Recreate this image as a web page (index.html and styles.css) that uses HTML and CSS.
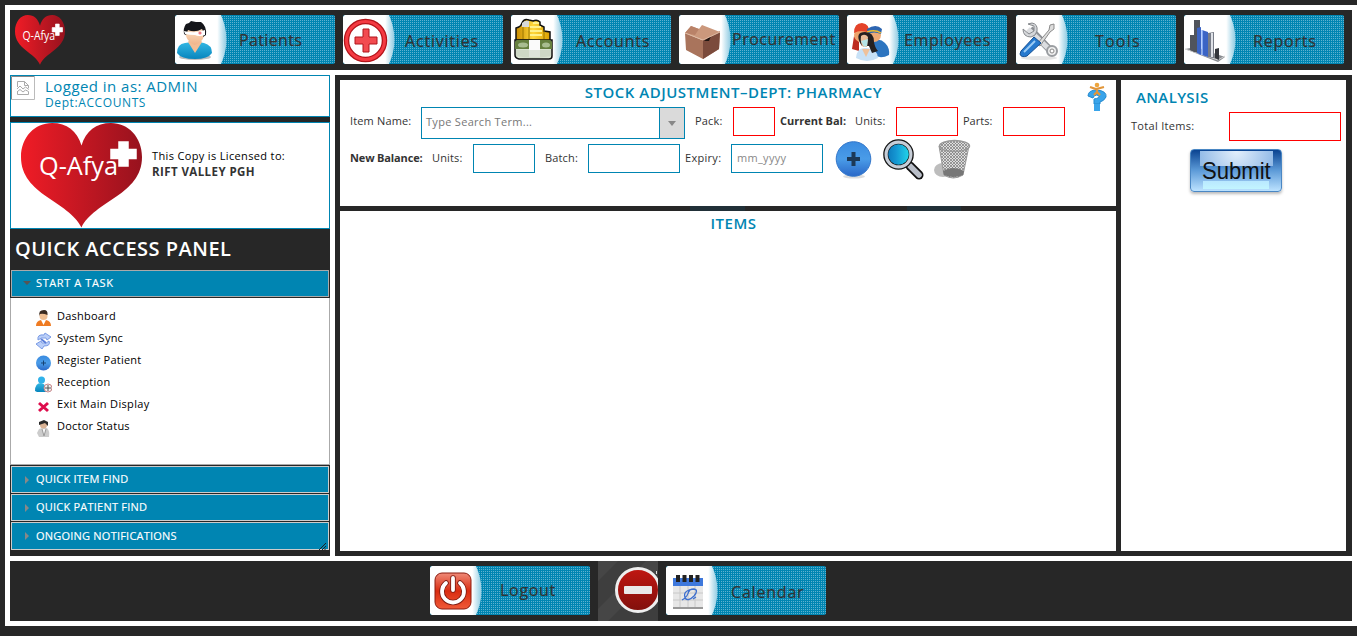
FILE: index.html
```html
<!DOCTYPE html>
<html lang="en"><head><meta charset="utf-8"><title>Q-Afya</title>
<link rel="stylesheet" href="styles.css"></head>
<body>
<svg class="defs" width="0" height="0" aria-hidden="true">
<defs>
<linearGradient id="red"><stop offset="0" stop-color="#f01c26"/><stop offset="1" stop-color="#97121e"/></linearGradient>
<linearGradient id="fade"><stop offset=".82" stop-color="#fff"/><stop offset="1" stop-color="#8fcbe2"/></linearGradient>
<linearGradient id="blue" x2="0" y2="1"><stop offset="0" stop-color="#3a8be0"/><stop offset=".5" stop-color="#4a9ce8"/><stop offset="1" stop-color="#2a68c8"/></linearGradient>
<linearGradient id="cyan" x2="0" y2="1"><stop offset="0" stop-color="#35b8e4"/><stop offset="1" stop-color="#0785bd"/></linearGradient>
<linearGradient id="gold"><stop offset="0" stop-color="#c88a00"/><stop offset=".5" stop-color="#ffd83b"/><stop offset="1" stop-color="#dba000"/></linearGradient>
<linearGradient id="lens"><stop offset="0" stop-color="#0a74b8"/><stop offset=".4" stop-color="#1596d2"/><stop offset="1" stop-color="#23e0ee"/></linearGradient>
<linearGradient id="power" x2="0" y2="1"><stop offset="0" stop-color="#ef8a78"/><stop offset=".5" stop-color="#d92c10"/><stop offset="1" stop-color="#f05a38"/></linearGradient>
<linearGradient id="stop" x2="0" y2="1"><stop offset="0" stop-color="#c01712"/><stop offset="1" stop-color="#80100c"/></linearGradient>
<linearGradient id="skin" x2="0" y2="1"><stop offset="0" stop-color="#ffe3c6"/><stop offset="1" stop-color="#eeb48a"/></linearGradient>
<pattern id="mesh" width="3" height="3" patternUnits="userSpaceOnUse"><rect width="3" height="3" fill="#ddd"/><path d="M0 0l3 3M3 0L0 3" stroke="#777" stroke-width=".7"/></pattern>
<symbol id="heart" viewBox="0 0 121 105"><path d="M60.500 104.500C48 78 0 72 0 34C0 14 14 0 31 0C46 0 56 8 60.500 22.500C65 8 75 0 90 0C107 0 121 14 121 34C121 72 73 78 60.500 104.500Z" fill="url(#red)"/><path d="M98 19h9v7.500h8v9h-8v7.500h-9v-7.500h-8v-9h8z" fill="#fff" stroke="#fff" stroke-width="1.500"/><text x="18" y="52" font-size="26" textLength="79" lengthAdjust="spacingAndGlyphs" fill="#fff" font-family="Open Sans,sans-serif">Q-Afya</text></symbol>
<symbol id="cap" viewBox="0 0 54 49"><path d="M2 0H46Q57 24.500 46 49H2Q0 49 0 47V2Q0 0 2 0Z" fill="url(#fade)"/></symbol>
</defs></svg>
<div class="frame">
<header class="bar top">
<svg class="logo" width="50" height="50" viewBox="0 0 121 105" preserveAspectRatio="none"><use href="#heart" width="121" height="105"/></svg>
<nav class="nav">
<a class="btn"><svg width="54" height="49"><use href="#cap"/><ellipse cx="20" cy="42" rx="16" ry="3" fill="#bbb"/><path d="M2 38Q2 29 10 28Q20 26 29 28Q37 30 37 38Q33 44 20 44Q6 44 2 38Z" fill="url(#cyan)"/><path d="M13 27L20 38L27 27L24 23H16Z" fill="#f2bd94"/><path d="M10 15Q10 26 19.500 30Q31 26 29 15Q20 10 10 15Z" fill="url(#skin)"/><path d="M9 19Q8 13 11 9L14 8L16 6L21 7L26 7Q32 11 31 20L28 22Q29 17 27 14Q20 18 13 15L11 20Z" fill="#15161a"/><path d="M9 16Q20 19 30 15V20Q24 22 20 20Q14 20 10 19Z" fill="#fff"/><circle cx="25" cy="18" r="1.600" fill="#ef7b86"/></svg><span class="t t1">Patients</span></a>
<a class="btn"><svg width="54" height="49"><use href="#cap"/><circle cx="22.500" cy="25.500" r="19" fill="#fff" stroke="#b3141a" stroke-width="5.500"/><circle cx="22.500" cy="25.500" r="19" fill="none" stroke="#f43a42" stroke-width="3"/><path d="M20 14h6v8h8v7h-8v8h-6v-8h-8v-7h8z" fill="#f24b50" stroke="#b0141a"/></svg><span class="t t2">Activities</span></a>
<a class="btn"><svg width="54" height="49"><use href="#cap"/><g stroke="#111" stroke-width="1.500"><path d="M5 25V13Q10 12 11 8Q13 3 18 5L22 6Q26 4 29 7V10L33 12V16L39 17V26Z" fill="url(#gold)"/><path d="M4 25H41V41Q41 44 38 44H8Q4 43 4 40Z" fill="#dbe4d2"/></g><path d="M11 12V8Q14 5 18 6V12Z" fill="#d9d9d9"/><path d="M12 12V24M18 12V24M33 15V24" stroke="#9c7600"/><path d="M22 8H28M19 12H30M19 16H31M19 20H31" stroke="#fff18b" stroke-width="2"/><path d="M4 27L6 25H39L41 27V34H4Z" fill="#66803f"/><ellipse cx="12" cy="30" rx="5" ry="2.500" fill="#a9bd90"/><ellipse cx="35" cy="30" rx="4" ry="2.500" fill="#a9bd90"/><path d="M18 25H29V42H18Z" fill="#fafafa"/><path d="M5 35H40V41Q22 44 5 41Z" fill="#c1cbb8" opacity=".5"/></svg><span class="t t3">Accounts</span></a>
<a class="btn"><svg width="54" height="49"><use href="#cap"/><path d="M6 18L23 25L41 16L40 34L24 44L7 35Z" fill="#a9745c"/><path d="M24 25L41 17L40 34L24 44Z" fill="#7b4b3c"/><path d="M6 18L12 11L20 14L23 10L41 17L24 25Z" fill="#cb987c"/><path d="M12 11L20 14L16 20L6 18Z" fill="#b98268"/><path d="M25 26L32 21L30 26Z" fill="#211511"/><path d="M6 18L24 25L41 17" fill="none" stroke="#debaa2"/></svg><span class="t t4">Procurement</span></a>
<a class="btn"><svg width="54" height="49"><use href="#cap"/><path d="M24 29Q31 21 38 28Q43 33 42 40Q33 45 25 39Z" fill="#2d75c0"/><path d="M5 34L7 21L12 27V36Z" fill="#bd2c20"/><circle cx="14" cy="20" r="7" fill="#eda36c"/><circle cx="27" cy="20" r="7" fill="#efaa75"/><path d="M7 18Q7 8 15 8Q23 9 22 18Q14 14 7 18Z" fill="#e44329"/><path d="M20 14Q29 8 35 14L34 19Q27 16 21 19Z" fill="#2d66b2"/><path d="M20 17Q28 14 34 18" stroke="#f4bd2b" stroke-width="1.500" fill="none"/><path d="M9 43Q10 33 17 33Q30 32 31 43Q20 49 9 43Z" fill="#c8e1f6"/><path d="M13 28Q8 17 18 17Q27 17 27 27Q28 33 31 36L25 38L22 31L15 31Z" fill="#252020"/><path d="M14 21Q18 18 21 22L20 32H16Q13 28 14 21Z" fill="#e9bd98"/><path d="M14 26L21 24L20 31L17 32Z" fill="#b4e4e6"/><path d="M15 34L19 42L23 34" fill="#efc19a"/></svg><span class="t t5">Employees</span></a>
<a class="btn"><svg width="54" height="49"><use href="#cap"/><ellipse cx="23" cy="43" rx="18" ry="2" fill="#e4e4e4"/><path d="M14 14L35 36" stroke="#8d9095" stroke-width="7"/><path d="M12 14L35 36" stroke="#dcdee1" stroke-width="5"/><path d="M12 9L18 11L18 16L13 19L7 14Q7 22 15 22L19 20L21 16Q22 9 16 8Z" fill="#d5d7da" stroke="#86898d"/><circle cx="36" cy="36" r="5" fill="#eee" stroke="#9a9da1" stroke-width="2"/><circle cx="36" cy="36" r="2" fill="#fff" stroke="#888"/><path d="M21 29L33 15L34 10L38 9L38 14L34 17L24 31Z" fill="#ddd" stroke="#8b8b8b"/><path d="M5 36L18 22L25 28L11 41Q5 43 4 39Z" fill="#2679ce" stroke="#164f92"/><path d="M8 37L19 26" stroke="#9bccf5" stroke-width="2"/></svg><span class="t t6">Tools</span></a>
<a class="btn"><svg width="54" height="49"><use href="#cap"/><path d="M1 34L12 32L41 42L34 47Z" fill="#888b90"/><path d="M1 34L34 45L41 41" stroke="#d0d0d0" fill="none"/><path d="M6 20H10V37L6 35ZM10 5H16V38L10 37Z" fill="#50545c"/><path d="M13 13L17 12V40L13 38ZM18 15L24 17V42L18 40Z" fill="#3b64c5"/><path d="M18 15V40" stroke="#9dbcff" stroke-width="1.500"/><path d="M24 18L30 17V43L24 42Z" fill="#777c87"/><path d="M28 18V42" stroke="#dfe2e8" stroke-width="2"/><path d="M31 34L35 33V45L31 43Z" fill="#33363b"/></svg><span class="t t7">Reports</span></a>
</nav></header>
<div class="main">
<aside class="side">
<section class="user"><svg class="broken" width="24" height="24"><path d="M0 0H24V24H0Z" fill="#fff"/><path d="M.5 24V.5H24" fill="none" stroke="#888"/><path d="M23.500 0V23.500H0" fill="none" stroke="#bbb"/><g fill="none" stroke="#aaa"><path d="M6.500 11V5.500H13.500L17.500 9.500V12M13.500 5.500V9.500H17.500M6 13L9 10L12 13L14.500 11L18 13.500M6.500 15V18.500H17.500V15.500L14.500 14L12 16L9 13.500L6.500 15.500"/></g></svg><div><p class="who"><span class="t">Logged in as: ADMIN</span></p><p class="dept"><span class="t">Dept:ACCOUNTS</span></p></div></section>
<section class="license"><svg width="121" height="105"><use href="#heart"/></svg><div><p><span class="t l1">This Copy is Licensed to:</span></p><p class="org"><span class="t">RIFT VALLEY PGH</span></p></div></section>
<h1><span class="t">QUICK ACCESS PANEL</span></h1>
<div class="acc">
<h3 class="open"><svg width="8" height="5"><path d="M0 0H8L4 4Z" fill="#555"/></svg><span class="t a1">START A TASK</span></h3>
<ul class="tasks">
<li><svg width="17" height="17"><path d="M1 16Q1 11 6 10L11 10Q16 11 16 16Z" fill="#ef7b22"/><path d="M6 10L8.500 15L11 10Z" fill="#fff"/><circle cx="8.500" cy="6" r="4" fill="#f0bf92"/><path d="M4.500 6Q3 0 9 0Q13 0 12.500 5Q8 3 5 4Z" fill="#3b2b21"/></svg><span class="t k1">Dashboard</span></li>
<li><svg width="17" height="17"><path d="M3 8Q2 2 9 3L10 1L16 5L12 8L11 6Q6 5 3 8ZM14 9Q16 14 9 14L7 17L1 12L6 9L7 11Q12 12 14 9Z" fill="#b9cef8" stroke="#7a9be5"/><path d="M6 7L11 11" stroke="#5c7fd9" stroke-width="2"/></svg><span class="t k2">System Sync</span></li>
<li><svg width="17" height="17"><circle cx="8.500" cy="9" r="7.500" fill="url(#blue)"/><path d="M8.500 6.500V11.500M6 9H11" stroke="#174275"/></svg><span class="t k3">Register Patient</span></li>
<li><svg width="17" height="17"><circle cx="6.500" cy="4" r="3.500" fill="#30b2ea"/><path d="M0 15Q0 7 6 7Q12 8 12 16H2Z" fill="url(#cyan)"/><circle cx="13" cy="12" r="4" fill="#eee" stroke="#c9898c"/><path d="M13 9V15M10 12H16" stroke="#555"/></svg><span class="t k4">Reception</span></li>
<li><svg width="17" height="17"><path d="M4 5L13 13M13 5L4 13" stroke="#de0c4c" stroke-width="3"/></svg><span class="t k5">Exit Main Display</span></li>
<li><svg width="17" height="17"><path d="M4 9L7 8L12 8Q15 11 14 17H4L2 13Z" fill="#ccc"/><path d="M7 9L9 16L11 9" fill="#f5f5f5" stroke="#999"/><circle cx="8.500" cy="5" r="3.500" fill="#d9b294"/><path d="M4 5V2L9 0L13 2V6L10 3Z" fill="#292929"/></svg><span class="t k6">Doctor Status</span></li>
</ul>
<h3><svg width="5" height="8"><path d="M0 0V8L4 4Z" fill="#888"/></svg><span class="t a2">QUICK ITEM FIND</span></h3>
<h3><svg width="5" height="8"><path d="M0 0V8L4 4Z" fill="#888"/></svg><span class="t a2">QUICK PATIENT FIND</span></h3>
<h3 class="last"><svg width="5" height="8"><path d="M0 0V8L4 4Z" fill="#888"/></svg><span class="t a2">ONGOING NOTIFICATIONS</span><svg class="grip" width="7" height="7"><path d="M0 7L7 0M3 7L7 3M5.500 7L7 5.500" stroke="#222"/></svg></h3>
</div></aside>
<div class="work">
<div class="center">
<section class="adjust">
<h2><span class="t">STOCK ADJUSTMENT–DEPT: PHARMACY</span></h2>
<svg class="help" width="22" height="30"><path d="M1 14Q1 8 10 8Q20 9 19 15Q17 19 13 20V22H7V17Q13 16 12 14Q10 12 7 14L6 16Z" fill="#39a4ea" stroke="#2389ce"/><path d="M7 22H13V29H7Z" fill="#39a4ea"/><circle cx="10" cy="3" r="2.300" fill="#eda53e"/><path d="M3 5L9 7L17 5M10 6V10L7 13M10 10L13 13" stroke="#e2963a" stroke-width="2.200" fill="none"/></svg>
<div class="row r1">
<label class="w71"><span class="t f1">Item Name:</span></label><div class="combo"><span class="t f2">Type Search Term...</span><i><svg width="8" height="5"><path d="M0 0H8L4 5Z" fill="#888"/></svg></i></div>
<label class="w38 in"><span class="t f1">Pack:</span></label><div class="field red s42"></div>
<label class="w75 b"><span class="t">Current Bal:</span></label><label class="w41"><span class="t f1">Units:</span></label><div class="field red s62"></div>
<label class="w40"><span class="t">Parts:</span></label><div class="field red s62"></div></div>
<div class="row r2">
<label class="w82 b"><span class="t f7">New Balance:</span></label><label class="w41"><span class="t f1">Units:</span></label><div class="field s62"></div>
<label class="w43 in"><span class="t f1">Batch:</span></label><div class="field s92"></div>
<label class="w46"><span class="t f2">Expiry:</span></label><div class="field s92 ph"><span class="t f2">mm_yyyy</span></div>
<div class="icons"><svg width="38" height="42"><ellipse cx="19" cy="37.500" rx="11" ry="2" fill="#ddd"/><circle cx="18.500" cy="20" r="17.300" fill="url(#blue)" stroke="#3477ca"/><path d="M18.500 13V27M12 20H25" stroke="#1c3957" stroke-width="4"/></svg><svg class="mag" width="42" height="42"><path d="M27 27L36 36" stroke="#111" stroke-width="9" stroke-linecap="round"/><path d="M27 27L36 36" stroke="#b9bec8" stroke-width="5.500" stroke-linecap="round"/><circle cx="15.500" cy="15.500" r="12.800" fill="url(#lens)" stroke="#141414" stroke-width="5"/><circle cx="15.500" cy="15.500" r="12.400" fill="none" stroke="#c7ced8" stroke-width="3.200"/></svg><svg class="bin" width="42" height="42"><ellipse cx="10" cy="31" rx="9" ry="7" fill="#bdbdbd"/><path d="M6 7L11 36Q20 42 30 36L36 7Z" fill="url(#mesh)" stroke="#999"/><path d="M10 32Q20 26 31 32L30 36Q20 40 11 36Z" fill="#777"/><ellipse cx="21.500" cy="7" rx="15" ry="5.500" fill="url(#mesh)" stroke="#999" stroke-width="1.500"/></svg></div></div>
</section>
<section class="items"><h2><span class="t">ITEMS</span></h2></section>
</div>
<section class="analysis"><h2><span class="t">ANALYSIS</span></h2><div class="total"><label><span class="t f2">Total Items:</span></label><div class="field red"></div></div><button class="submit"><span class="t">Submit</span></button></section>
</div></div>
<footer class="bar foot">
<a class="btn"><svg width="54" height="49"><use href="#cap"/><rect x="5" y="7" width="36" height="36" rx="7" fill="url(#power)" stroke="#8c1c10"/><path d="M16 17A11 11 0 1 0 30 17M23 12V24" fill="none" stroke="#7d1a10" stroke-width="5.500" stroke-linecap="round"/><path d="M16 17A11 11 0 1 0 30 17M23 12V24" fill="none" stroke="#fff" stroke-width="3.800" stroke-linecap="round"/></svg><span class="t t8">Logout</span></a>
<svg class="stop" width="60" height="60"><rect width="60" height="60" fill="#3e3e3e"/><path d="M0 0H20L0 20ZM48 0H60V10L10 60H0V48Z" fill="#464646"/><circle cx="40" cy="29" r="21.500" fill="url(#stop)" stroke="#eee" stroke-width="3"/><rect x="26" y="25" width="28" height="8" rx="1" fill="#e9e9e9"/><path d="M58.500 10V13" stroke="#ddd"/></svg>
<a class="btn"><svg width="54" height="49"><use href="#cap"/><path d="M7 12H37V43H7Z" fill="#999"/><path d="M7 18H37V41H7Z" fill="#e7e7e7"/><path d="M7 12H37V20H7Z" fill="#3e78dc"/><path d="M7 27H37M7 34H37M14 20V41M22 20V41M29 20V41" stroke="#c8c8c8"/><path d="M12 9V16M18.500 9V16M25 9V16M31.500 9V16" stroke="#222" stroke-width="4"/><path d="M16 34Q22 31 23 24Q17 26 19 32Q22 36 28 30Q33 24 28 23Q23 23 23 26M27 33L30 31" fill="none" stroke="#3d6fcf" stroke-width="1.300"/></svg><span class="t t9">Calendar</span></a>
</footer>
</div>
</body></html>
```
FILE: styles.css
```css
*{box-sizing:border-box}
body{margin:0;background:#272727;font:11px/16px "Open Sans","Noto Sans",sans-serif;color:#333;height:636px;overflow:hidden}
h1,h2,h3,p,ul{margin:0;padding:0;font-weight:400}
svg{display:block;flex:none}
.defs{position:absolute}
.t{display:inline-block;white-space:nowrap}
.frame{margin:5px 0 0 5px;padding:5px;background:#fff;height:621px;display:flex;flex-direction:column;gap:5px}
.bar{height:60px;background:#272727;display:flex;flex:none}
.top{padding:5px 8px 6px 5px;justify-content:space-between}
.nav{display:flex;gap:8px}
.btn:nth-child(6){margin-left:1px}
.btn{width:160px;height:49px;display:flex;align-items:flex-start;border-radius:2px;overflow:hidden;font-size:16px;line-height:24px;color:#333;background:linear-gradient(#0085b2 50%,transparent 50%) 0 0/2px 2px,linear-gradient(90deg,#0085b2 50%,#5fb2d0 50%) 0 0/2px 2px}
.btn .t{-webkit-text-stroke:.2px #333}
.t1{margin:13px 0 0 10px;letter-spacing:.35px}
.t2{margin:14px 0 0 8px;letter-spacing:.8px}
.t3{margin:14px 0 0 11px;letter-spacing:.75px}
.t4{margin:12px 0 0 -1px;letter-spacing:.5px}
.t5{margin:13px 0 0 3px;letter-spacing:.7px}
.t6{margin:14px 0 0 25px;letter-spacing:1.2px}
.t7{margin:14px 0 0 15px;letter-spacing:.8px}
.t8{margin:12px 0 0 16px;letter-spacing:.7px}
.t9{margin:14px 0 0 11px;letter-spacing:.8px}
.main{height:481px;flex:none;display:flex;gap:5px}
.side{width:320px;background:#272727;flex:none}
.user{height:42px;border:1px solid #0085b2;background:#fff;display:flex;color:#0085b2}
.user div{margin-left:10px}
.who{font-size:15px;line-height:20px;letter-spacing:.46px}
.dept{font-size:12px;line-height:14px;letter-spacing:.6px}
.license{height:107px;margin-top:5px;border:1px solid #0085b2;background:#fff;display:flex;padding-left:10px;color:#000}
.license div{margin:25px 0 0 10px}
.license p{line-height:16px}
.l1{letter-spacing:.35px}
.license .org{font-size:11.5px;font-weight:700;color:#333;letter-spacing:.42px}
.side h1{font-size:20px;line-height:39px;height:41px;padding-left:5px;color:#fff;font-weight:600;letter-spacing:.5px}
.acc h3{height:27px;margin:0 1px 1px;border:1px solid #ccc;background:#0085b2;color:#fff;display:flex;align-items:center;font-size:11px;position:relative;padding-left:13px}
.acc h3 .t{margin:-2px 0 0 6px;-webkit-text-stroke:.15px #fff}
.acc h3.open{border-color:#aaa;padding-left:11px}
.acc h3.open .t{margin-left:5px}
.a1{letter-spacing:.6px}
.a2{letter-spacing:.22px}
.acc h3.last{height:28px;margin-bottom:0}
.acc h3.last .t{margin-top:0}
.grip{position:absolute;right:2px;bottom:-1px}
.tasks{list-style:none;height:167px;border:1px solid #aaa;border-top:0;background:#fff;padding:8px 0 0 24px;margin-bottom:1px;color:#000;letter-spacing:.24px}
.tasks li{height:22px;display:flex;align-items:center;gap:5px}
.tasks svg{margin-top:3px}
.tasks .t{margin-top:-2px}
.k5{letter-spacing:.33px}
.work{flex:1;background:#272727;padding:5px 6px 5px 5px;display:flex;gap:5px}
.center{width:776px;display:flex;flex-direction:column;gap:5px;background:linear-gradient(90deg,transparent 350px,#213038 350px 405px,transparent 405px 567px,#213038 567px 621px,transparent 621px)}
.center section,.analysis{background:#fff}
.adjust{height:126px;position:relative}
.items{flex:1}
h2{font-size:15px;line-height:24px;height:26px;color:#0085b2;font-weight:600;text-align:center;padding-left:11px;letter-spacing:.5px}
.adjust h2,.items h2,.analysis h2{font-weight:600}
.help{position:absolute;left:747px;top:2px}
.row{display:flex;align-items:flex-start;padding-left:10px}
.r1{margin-top:1px;height:37px}
.row label{line-height:16px;padding-top:6px;flex:none}
.in{padding-left:10px}
.b{font-weight:700}
.row .b{padding-left:5px}
.r2 .b{padding-left:0}
.w71{width:71px}
.w38{width:48px}
.w75{width:80px}
.w41{width:41px}
.w40{width:45px;padding-left:5px}
.w82{width:82px}
.w43{width:53px}
.w46{width:51px;padding-left:5px}
.f1{letter-spacing:.15px}
.f2{letter-spacing:.3px}
.f7{letter-spacing:-.15px}
.combo{width:264px;height:32px;border:1px solid #0085b2;display:flex;padding:6px 0 0 4px;justify-content:space-between;color:#777}
.combo i{width:25px;height:30px;margin-top:-6px;background:#dadada;border-left:1px solid #0085b2;display:flex;align-items:center;justify-content:center}
.field{height:29px;border:1px solid #0085b2;background:#fff;flex:none}
.red{border-color:#f00}
.s42{width:42px}
.s62{width:62px}
.s92{width:92px}
.ph{padding:5px 0 0 5px;color:#888}
.icons{display:flex;margin:-5px 0 0 12px}
.mag{margin-left:10px}
.bin{margin-left:8px}
.analysis{width:225px}
.analysis h2{text-align:left;padding:5px 0 0 15px;height:32px;letter-spacing:.35px}
.total{display:flex;padding-left:10px}
.total label{width:98px;padding-top:6px}
.total .field{width:112px}
.submit{display:block;margin:8px 0 0 69px;width:92px;height:43px;border:1px solid #4a87c4;border-radius:4px;background:radial-gradient(circle at 50% 0,#e3effc,#8fb8e6) 9px 1px/73px 15px no-repeat,linear-gradient(#b9e8ff,#c3f5ff) 12px 31px/66px 8px no-repeat,linear-gradient(#0a4391,#5d9bd8 50%,#bce2ff);box-shadow:0 2px 3px #bbb;font:24px/40px "Liberation Sans",sans-serif;color:#111;padding:0}
.submit .t{transform:scaleX(.92)}
.foot{padding:5px 0 0 420px}
.foot .stop{margin:-5px 8px 0}
```
